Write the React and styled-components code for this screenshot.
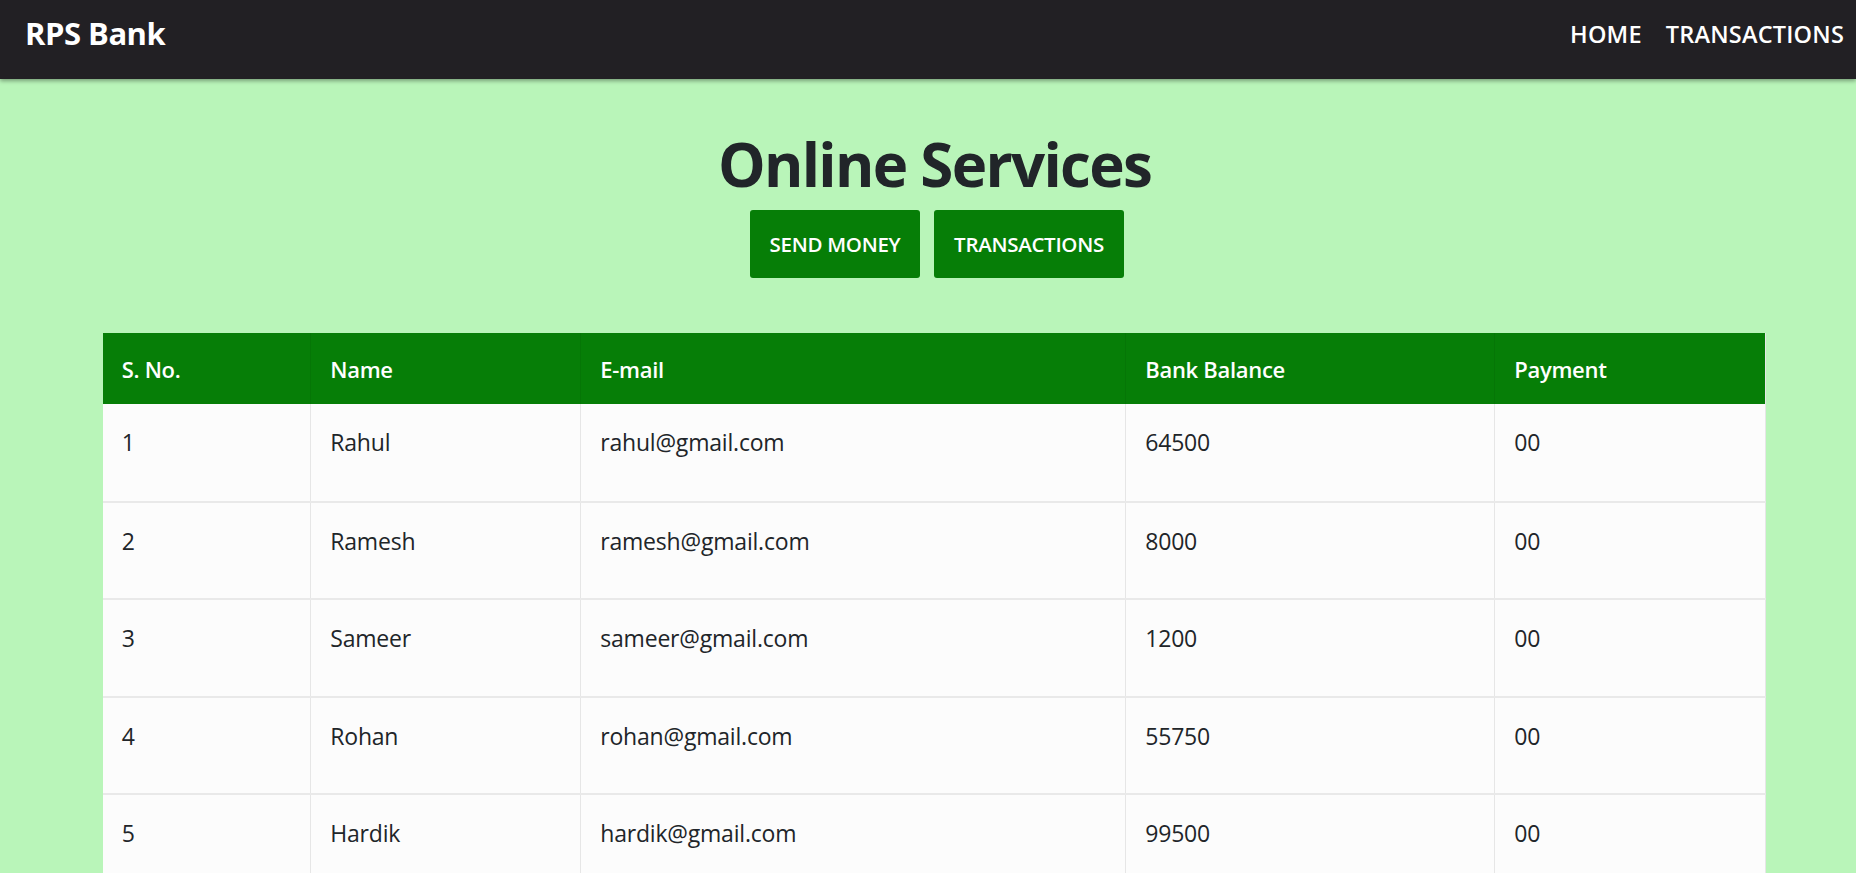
import React from "react";
import styled, { createGlobalStyle } from "styled-components";

const GlobalStyle = createGlobalStyle`
  html, body {
    margin: 0;
    padding: 0;
  }
  body {
    background: #b9f5b9;
    font-family: "Open Sans", "Noto Sans", sans-serif;
    color: #212529;
  }
`;

const Navbar = styled.nav`
  display: flex;
  justify-content: space-between;
  align-items: flex-start;
  height: 79px;
  box-sizing: border-box;
  padding: 10px 12px 0 25px;
  background: #222024;
  box-shadow: 0 2px 4px rgba(0, 0, 0, 0.35);
  position: relative;
`;
const Brand = styled.div`
  color: #fff;
  font-size: 31px;
  line-height: 46px;
  font-weight: 700;
  letter-spacing: -0.5px;
`;
const NavLinks = styled.div`
  display: flex;
  gap: 24px;
  padding-top: 4px;
`;
const NavLink = styled.a`
  color: #fff;
  font-size: 23.5px;
  line-height: 40px;
  font-weight: 600;
  letter-spacing: 0.2px;
  text-decoration: none;
`;

const Main = styled.main`
  display: flex;
  flex-direction: column;
  align-items: center;
  padding: 49px 90px 0 103px;
`;
const Title = styled.h1`
  margin: 0;
  font-size: 60px;
  font-weight: 700;
  line-height: 1.2;
  letter-spacing: -1.7px;
`;
const ButtonRow = styled.div`
  display: flex;
  gap: 14px;
  margin: 10px 0 0 5px;
`;
const ActionButton = styled.button`
  height: 68px;
  width: ${(p) => p.w}px;
  border: none;
  border-radius: 3px;
  background: #067e07;
  color: #fff;
  font-family: inherit;
  font-size: 20.5px;
  font-weight: 600;
  letter-spacing: -0.3px;
`;

const Table = styled.table`
  width: 100%;
  table-layout: fixed;
  margin-top: 55px;
  border-collapse: collapse;
  background: #fcfcfc;
  border-right: 1px solid #e6e6e6;
`;
const HeadCell = styled.th`
  height: 71px;
  padding: 0 19px;
  box-sizing: border-box;
  background: #067e07;
  color: #fff;
  text-align: left;
  font-size: 22px;
  font-weight: 600;
  letter-spacing: -0.3px;
  border-left: 1px solid rgba(0, 0, 0, 0.06);
  &:first-child {
    border-left: none;
  }
`;
const Row = styled.tr`
  height: 97.5px;
  border-bottom: 2px solid #e9e9e9;
`;
const Cell = styled.td`
  padding: 21px 19px 0 19px;
  vertical-align: top;
  font-size: 23px;
  line-height: 1.5;
  letter-spacing: -0.2px;
  border-left: 1px solid #e6e6e6;
  &:first-child {
    border-left: none;
  }
`;

const columns = [
  { label: "S. No.", w: 208 },
  { label: "Name", w: 270 },
  { label: "E-mail", w: 545 },
  { label: "Bank Balance", w: 369 },
  { label: "Payment", w: 271 },
];

const customers = [
  { id: 1, name: "Rahul", email: "rahul@gmail.com", balance: "64500", payment: "00" },
  { id: 2, name: "Ramesh", email: "ramesh@gmail.com", balance: "8000", payment: "00" },
  { id: 3, name: "Sameer", email: "sameer@gmail.com", balance: "1200", payment: "00" },
  { id: 4, name: "Rohan", email: "rohan@gmail.com", balance: "55750", payment: "00" },
  { id: 5, name: "Hardik", email: "hardik@gmail.com", balance: "99500", payment: "00" },
];

export default function App() {
  return (
    <>
      <GlobalStyle />
      <Navbar>
        <Brand>RPS Bank</Brand>
        <NavLinks>
          <NavLink href="#">HOME</NavLink>
          <NavLink href="#">TRANSACTIONS</NavLink>
        </NavLinks>
      </Navbar>
      <Main>
        <Title>Online Services</Title>
        <ButtonRow>
          <ActionButton w={170}>SEND MONEY</ActionButton>
          <ActionButton w={190}>TRANSACTIONS</ActionButton>
        </ButtonRow>
        <Table>
          <colgroup>
            {columns.map((c) => (
              <col key={c.label} style={{ width: c.w }} />
            ))}
          </colgroup>
          <thead>
            <tr>
              {columns.map((c) => (
                <HeadCell key={c.label}>{c.label}</HeadCell>
              ))}
            </tr>
          </thead>
          <tbody>
            {customers.map((c) => (
              <Row key={c.id}>
                <Cell>{c.id}</Cell>
                <Cell>{c.name}</Cell>
                <Cell>{c.email}</Cell>
                <Cell>{c.balance}</Cell>
                <Cell>{c.payment}</Cell>
              </Row>
            ))}
          </tbody>
        </Table>
      </Main>
    </>
  );
}
